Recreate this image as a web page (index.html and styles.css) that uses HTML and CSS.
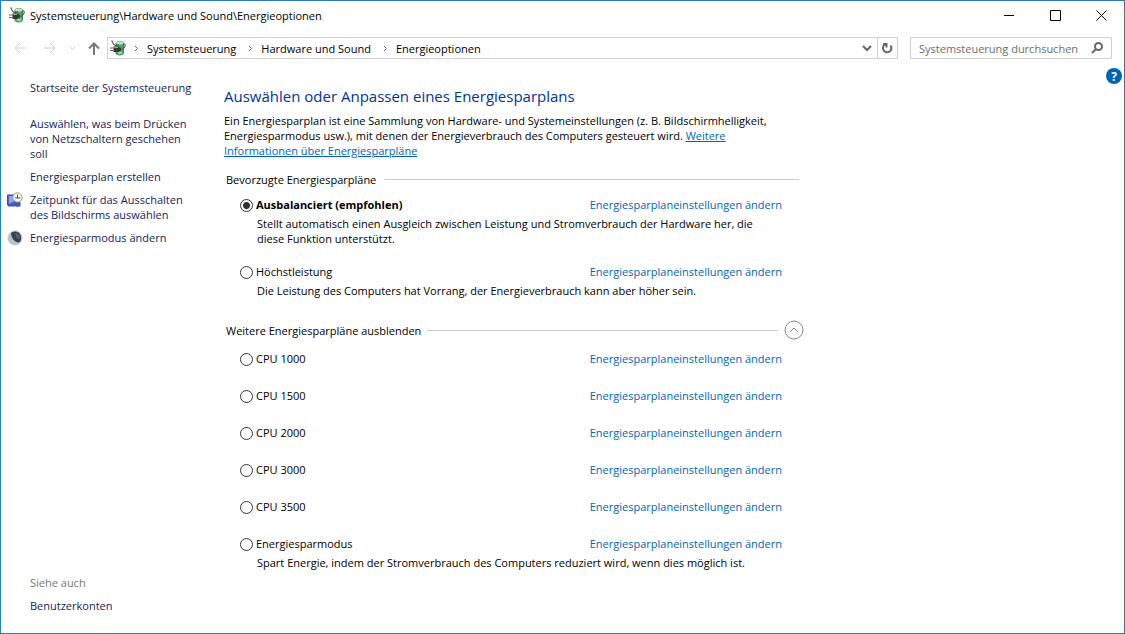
FILE: index.html
```html
<!DOCTYPE html>
<html lang="de">
<head>
    <meta charset="utf-8">
    <title>Energieoptionen</title>
    <link rel="stylesheet" href="styles.css">
</head>
<body>
<!-- Shared battery/plug icon -->
<svg width="0" height="0" class="defs" aria-hidden="true">
    <symbol id="power" viewBox="0 0 16 16">
        <path d="M6 3C6 1.500 13 1 13.500 3V13C13 15.500 6.500 15.500 6 13.500Z" fill="#4fa866" stroke="#2c6b40" stroke-width=".8"/>
        <ellipse cx="9.700" cy="3" rx="3.400" ry="1.500" fill="#c4e8c8"/>
        <path d="M7.500 12.500L12 11.500V13.500L9 14.500Z" fill="#9be0a2"/>
        <path d="M1.500 .5C3 1.500 2.500 4 4.500 5S7 6 9 4.500M13.500 3.500C16.500 4 15.500 8 11.500 9.500" fill="none" stroke="#4d5a52" stroke-width="1.100"/>
        <path d="M3.500 6.500H8L11 8V10.500L8 12H3.500Z" fill="#333a36"/>
        <path d="M4.500 7.500H8" stroke="#a5ada7"/>
        <path d="M0 8H3.500M0 10.500H3.500" stroke="#6b5f45" stroke-width="1.200"/>
    </symbol>
</svg>

<div class="window">
    <!-- Title bar -->
    <header class="titlebar">
        <svg class="icon" aria-hidden="true"><use href="#power"/></svg>
        <span class="caption">Systemsteuerung\Hardware und Sound\Energieoptionen</span>
        <button type="button" class="winbtn" aria-label="Minimieren">
            <svg width="11" height="11"><path d="M0 5.500H10"/></svg>
        </button>
        <button type="button" class="winbtn" aria-label="Maximieren">
            <svg width="11" height="11"><path d="M.5 .5H10.500V10.500H.5Z"/></svg>
        </button>
        <button type="button" class="winbtn" aria-label="Schließen">
            <svg width="11" height="11"><path d="M.5 .5L10.500 10.500M10.500 .5L.5 10.500"/></svg>
        </button>
    </header>

    <!-- Navigation -->
    <nav class="navbar">
        <div class="history">
            <button type="button" class="off" aria-label="Zurück">
                <svg width="13" height="12"><path d="M1 6H12M6 1L1 6L6 11"/></svg>
            </button>
            <button type="button" class="off" aria-label="Vorwärts">
                <svg width="13" height="12"><path d="M1 6H12M7 1L12 6L7 11"/></svg>
            </button>
            <button type="button" class="off recent" aria-label="Zuletzt besucht">
                <svg width="7" height="5"><path d="M1 1L3.500 3.500L6 1"/></svg>
            </button>
            <button type="button" class="up" aria-label="Nach oben">
                <svg width="12" height="13"><path d="M6 13V2M1 6.500L6 1.500L11 6.500"/></svg>
            </button>
        </div>
        <div class="address">
            <svg class="icon" aria-hidden="true"><use href="#power"/></svg>
            <svg class="sep" width="5" height="7"><path d="M1 1L3.500 3.500L1 6"/></svg>
            <a href="#">Systemsteuerung</a>
            <svg class="sep" width="5" height="7"><path d="M1 1L3.500 3.500L1 6"/></svg>
            <a href="#">Hardware und Sound</a>
            <svg class="sep" width="5" height="7"><path d="M1 1L3.500 3.500L1 6"/></svg>
            <a href="#">Energieoptionen</a>
            <button type="button" class="drop" aria-label="Verlauf">
                <svg width="10" height="7"><path d="M1 1L5 5L9 1"/></svg>
            </button>
            <button type="button" class="refresh" aria-label="Aktualisieren">
                <svg width="11" height="12"><path d="M3 2.500A4.200 4.200 0 1 0 8.500 3.500M1 2H4.500V5.500"/></svg>
            </button>
        </div>
        <form class="search">
            <input type="text" aria-label="Suchen" placeholder="Systemsteuerung durchsuchen">
            <svg width="12" height="12"><circle cx="7.500" cy="4.500" r="3.500"/><path d="M5 7L1 11"/></svg>
        </form>
    </nav>

    <div class="content">
        <aside class="sidebar">
            <a class="home" href="#">Startseite der Systemsteuerung</a>
            <a href="#">Auswählen, was beim Drücken von Netzschaltern geschehen soll</a>
            <a href="#">Energiesparplan erstellen</a>
            <a href="#">
                <svg class="icon" viewBox="0 0 16 16" aria-hidden="true">
                    <path d="M.5 3H9V13H.5Z" fill="#4a63c8" stroke="#34469c"/>
                    <path d="M2 4H7V9L2 12Z" fill="#8fa6ee"/>
                    <path d="M1 12.500H12V14.500H1Z" fill="#4056b0"/>
                    <path d="M9 10H13.500V14.500H9Z" fill="#4056b0"/>
                    <circle cx="10.500" cy="5.500" r="4.700" fill="#f4f8ef" stroke="#8c9a8c"/>
                    <path d="M10.500 2.500V6H13.500M8 6H10.500" fill="none" stroke="#3c5a48"/>
                </svg>
                Zeitpunkt für das Ausschalten des Bildschirms auswählen
            </a>
            <a href="#">
                <svg class="icon" viewBox="0 0 16 16" aria-hidden="true">
                    <circle cx="8" cy="8" r="7.300" fill="#b9c0ca" stroke="#d3d7dd" stroke-width=".8"/>
                    <path d="M4 3C7 .5 12 1 13.500 5S13.500 12 11.500 12.500S4 9 4 3Z" fill="#3a4150"/>
                    <path d="M8 3C11 3 13 6 12.500 9L10 8Z" fill="#596274"/>
                </svg>
                Energiesparmodus ändern
            </a>
            <h2>Siehe auch</h2>
            <a href="#">Benutzerkonten</a>
        </aside>

        <main>
            <h1>Auswählen oder Anpassen eines Energiesparplans</h1>
            <p class="intro">Ein Energiesparplan ist eine Sammlung von Hardware- und Systemeinstellungen (z. B. Bildschirmhelligkeit, Energiesparmodus usw.), mit denen der Energieverbrauch des Computers gesteuert wird. <a href="#">Weitere Informationen über Energiesparpläne</a></p>

            <div class="group">
                <h2>Bevorzugte Energiesparpläne</h2>
            </div>
            <div class="plan">
                <input type="radio" name="plan" id="balanced" checked>
                <label for="balanced"><b>Ausbalanciert (empfohlen)</b></label>
                <a href="#">Energiesparplaneinstellungen ändern</a>
                <p>Stellt automatisch einen Ausgleich zwischen Leistung und Stromverbrauch der Hardware her, die diese Funktion unterstützt.</p>
            </div>
            <div class="plan">
                <input type="radio" name="plan" id="high">
                <label for="high">Höchstleistung</label>
                <a href="#">Energiesparplaneinstellungen ändern</a>
                <p>Die Leistung des Computers hat Vorrang, der Energieverbrauch kann aber höher sein.</p>
            </div>

            <div class="group more">
                <h2>Weitere Energiesparpläne ausblenden</h2>
                <button type="button" aria-label="Ausblenden">
                    <svg width="20" height="20"><circle cx="10" cy="10" r="9"/><path d="M6 12L10 8L14 12"/></svg>
                </button>
            </div>
            <div class="plan short">
                <input type="radio" name="plan" id="cpu1000">
                <label for="cpu1000">CPU 1000</label>
                <a href="#">Energiesparplaneinstellungen ändern</a>
            </div>
            <div class="plan short">
                <input type="radio" name="plan" id="cpu1500">
                <label for="cpu1500">CPU 1500</label>
                <a href="#">Energiesparplaneinstellungen ändern</a>
            </div>
            <div class="plan short">
                <input type="radio" name="plan" id="cpu2000">
                <label for="cpu2000">CPU 2000</label>
                <a href="#">Energiesparplaneinstellungen ändern</a>
            </div>
            <div class="plan short">
                <input type="radio" name="plan" id="cpu3000">
                <label for="cpu3000">CPU 3000</label>
                <a href="#">Energiesparplaneinstellungen ändern</a>
            </div>
            <div class="plan short">
                <input type="radio" name="plan" id="cpu3500">
                <label for="cpu3500">CPU 3500</label>
                <a href="#">Energiesparplaneinstellungen ändern</a>
            </div>
            <div class="plan">
                <input type="radio" name="plan" id="saver">
                <label for="saver">Energiesparmodus</label>
                <a href="#">Energiesparplaneinstellungen ändern</a>
                <p>Spart Energie, indem der Stromverbrauch des Computers reduziert wird, wenn dies möglich ist.</p>
            </div>
        </main>

        <button type="button" class="help" aria-label="Hilfe">?</button>
    </div>
</div>
</body>
</html>
```
FILE: styles.css
```css
* {
    box-sizing: border-box;
}

body {
    margin: 0;
    background: #fff;
    color: #000;
    font: 11px/15px "Open Sans", "Noto Sans", sans-serif;
}

h1, h2, p {
    margin: 0;
    font-size: 11px;
    font-weight: normal;
}

a {
    color: #0066b4;
    text-decoration: none;
}

button {
    display: flex;
    align-items: center;
    justify-content: center;
    padding: 0;
    border: 0;
    background: none;
    font: inherit;
}

svg {
    display: block;
    flex: none;
    fill: none;
    stroke: #000;
}

.defs {
    position: absolute;
}

.icon {
    width: 16px;
    height: 16px;
    stroke: none;
}

.window {
    display: flex;
    flex-direction: column;
    min-height: 100vh;
    border: 1px solid #2b7fb0;
}

/* Title bar */
.titlebar {
    display: flex;
    align-items: center;
    height: 28px;
    padding-left: 8px;
}

.caption {
    flex: 1;
    margin-left: 5px;
}

.winbtn {
    width: 46px;
    height: 28px;
}

/* Navigation */
.navbar {
    display: flex;
    align-items: center;
    height: 36px;
    padding: 2px 12px 0;
}

.history {
    display: flex;
    align-items: center;
    width: 94px;
    gap: 16px;
    padding-left: 1px;
}

.history svg {
    stroke: #777;
    stroke-width: 2;
}

.history .off svg {
    stroke: #ccc;
    stroke-width: 1;
}

.history .recent {
    margin-right: -4px;
    margin-left: -3px;
}

.address {
    display: flex;
    flex: 1;
    align-items: center;
    height: 22px;
    padding-left: 2px;
    border: 1px solid #d0d0d0;
}

.address a {
    color: #000;
}

.address svg {
    stroke: #666;
}

.address .icon {
    stroke: none;
}

.sep {
    margin: 0 8px;
}

.address a + .sep {
    margin-left: 12px;
}

.drop {
    width: 20px;
    height: 20px;
    margin-left: auto;
}

.drop svg, .refresh svg {
    stroke-width: 2;
}

.refresh {
    width: 20px;
    height: 20px;
    border-left: 1px solid #d0d0d0;
}

.search {
    display: flex;
    align-items: center;
    width: 202px;
    height: 22px;
    margin-left: 12px;
    padding: 0 8px;
    border: 1px solid #d0d0d0;
}

.search input {
    flex: 1;
    min-width: 0;
    padding: 0;
    border: 0;
    outline: 0;
    font: inherit;
}

.search input::placeholder {
    color: #6d6d6d;
}

.search svg {
    stroke: #666;
    stroke-width: 2;
}

/* Content */
.content {
    position: relative;
    display: flex;
    flex: 1;
    padding: 15px 0 20px;
}

.sidebar {
    display: flex;
    flex-direction: column;
    gap: 8px;
    width: 223px;
    padding: 0 24px 0 29px;
}

.sidebar a {
    position: relative;
    color: #151c55;
}

.sidebar .home {
    margin-bottom: 13px;
}

.sidebar .icon {
    position: absolute;
    left: -23px;
    top: 0;
}

.sidebar h2 {
    margin-top: auto;
    color: #777;
}

main {
    flex: 1;
    max-width: 580px;
    padding-top: 5px;
}

h1 {
    color: #003399;
    font-size: 15px;
    line-height: 22px;
}

.intro {
    max-width: 570px;
    margin: 6px 0 14px;
}

.intro a {
    text-decoration: underline;
}

.group {
    display: flex;
    align-items: center;
    gap: 8px;
    margin-bottom: 10px;
    padding: 0 5px 0 2px;
}

.group::after {
    content: "";
    flex: 1;
    height: 1px;
    background: #ccc;
}

.more {
    gap: 6px;
    margin: 22px 0 11px;
    padding-right: 0;
}

.more button {
    order: 1;
}

.more svg {
    stroke: #888;
}

.plan {
    display: grid;
    grid-template-columns: 13px 1fr auto;
    gap: 4px 3px;
    align-items: center;
    margin-bottom: 18px;
    padding: 0 22px 0 16px;
}

.short {
    margin-bottom: 22px;
}

.plan:last-child {
    margin-bottom: 0;
}

.plan p {
    grid-column: 2 / 4;
    padding-left: 1px;
}

.plan input {
    appearance: none;
    width: 13px;
    height: 13px;
    margin: 2px 0 0;
    border: 1px solid #333;
    border-radius: 50%;
    background: #fff;
}

.plan input:checked {
    background: radial-gradient(circle, #333 3px, #fff 4px);
}

.help {
    position: absolute;
    top: 3px;
    right: 2px;
    width: 16px;
    height: 16px;
    border-radius: 50%;
    background: #0063b1;
    color: #fff;
    font-size: 12px;
    font-weight: bold;
}
```
